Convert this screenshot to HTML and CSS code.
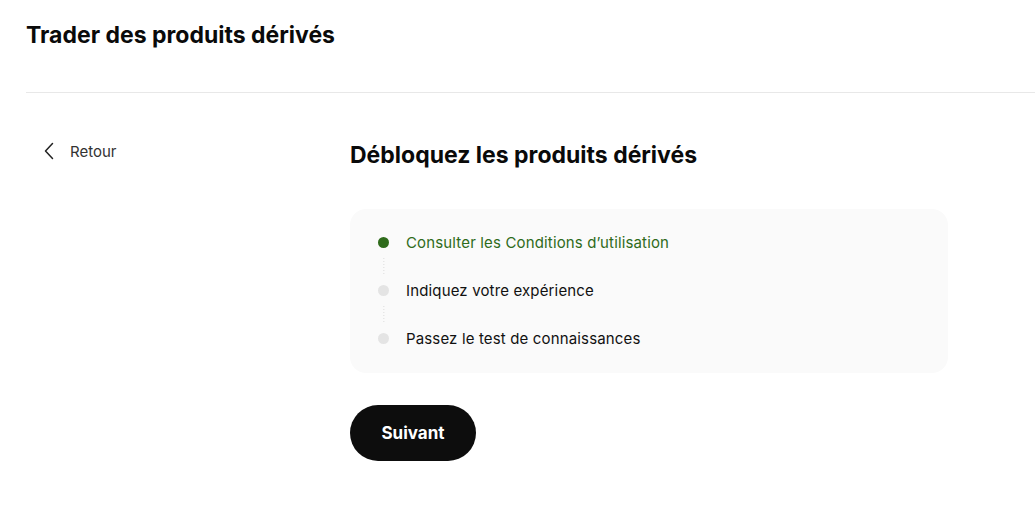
FILE: index.html
```html
<!DOCTYPE html>
<html lang="fr">
<head>
<meta charset="utf-8">
<title>Trader des produits dérivés</title>
<link rel="stylesheet" href="styles.css">
</head>
<body>
<header class="page-header">
  <h1 class="page-title">Trader des produits dérivés</h1>
</header>
<div class="layout">
  <aside class="sidebar">
    <a class="back-link" href="#">
      <svg class="back-icon" width="12" height="18" viewBox="0 0 12 18" fill="none"><path d="M9.5 1.5 L2.5 9 L9.5 16.5" stroke="#222" stroke-width="1.5" stroke-linecap="round" stroke-linejoin="round"/></svg>
      <span>Retour</span>
    </a>
  </aside>
  <main class="main">
    <h2 class="main-title">Débloquez les produits dérivés</h2>
    <div class="steps-card">
      <div class="step step-active">
        <span class="step-dot"></span>
        <span class="step-label">Consulter les Conditions d’utilisation</span>
      </div>
      <div class="step-connector"></div>
      <div class="step">
        <span class="step-dot"></span>
        <span class="step-label">Indiquez votre expérience</span>
      </div>
      <div class="step-connector"></div>
      <div class="step">
        <span class="step-dot"></span>
        <span class="step-label">Passez le test de connaissances</span>
      </div>
    </div>
    <button class="btn-primary" type="button">Suivant</button>
  </main>
</div>
</body>
</html>
```
FILE: styles.css
```css
* { box-sizing: border-box; }
html, body { margin: 0; padding: 0; background: #fff; }
body {
  font-family: Inter, "Liberation Sans", Arial, sans-serif;
  color: #0a0a0a;
}
.page-header {
  margin-left: 26px;
  height: 93px;
  border-bottom: 1px solid #e8e8e8;
  padding-top: 21px;
}
.page-title {
  margin: 0;
  font-size: 23px;
  font-weight: 700;
  letter-spacing: 0;
  line-height: 28px;
}
.layout {
  display: grid;
  grid-template-columns: 324px 598px;
  margin-left: 26px;
  padding-top: 47px;
}
.sidebar { padding-left: 17px; }
.back-link {
  display: flex;
  align-items: center;
  gap: 15px;
  color: #333;
  text-decoration: none;
  font-size: 15px;
  height: 22px;
}
.main-title {
  margin: 0;
  font-size: 23px;
  font-weight: 700;
  letter-spacing: 0;
  line-height: 30px;
}
.steps-card {
  margin-top: 39px;
  background: #fafafa;
  border-radius: 16px;
  padding: 23px 28px 25px 28px;
  display: flex;
  flex-direction: column;
}
.step {
  display: flex;
  align-items: center;
  gap: 17px;
  height: 20px;
  font-size: 15px;
  letter-spacing: 0.15px;
  color: #111;
}
.step-dot {
  width: 11px;
  height: 11px;
  border-radius: 50%;
  background: #e4e4e4;
  flex: none;
}
.step-active { color: #2f6b1b; }
.step-active .step-dot { background: #2f6b1b; }
.step-connector {
  margin-left: 4.5px;
  width: 2px;
  height: 28px;
  background-image: linear-gradient(#e6e6e6 50%, transparent 50%);
  background-size: 2px 3px;
  background-repeat: repeat-y;
  clip-path: inset(5px 0 5px 0);
}
.btn-primary {
  margin-top: 32px;
  width: 126px;
  height: 56px;
  border: none;
  border-radius: 28px;
  background: #0d0d0d;
  color: #fff;
  font-family: inherit;
  font-size: 17px;
  font-weight: 700;
  letter-spacing: 0;
  cursor: pointer;
}
```
